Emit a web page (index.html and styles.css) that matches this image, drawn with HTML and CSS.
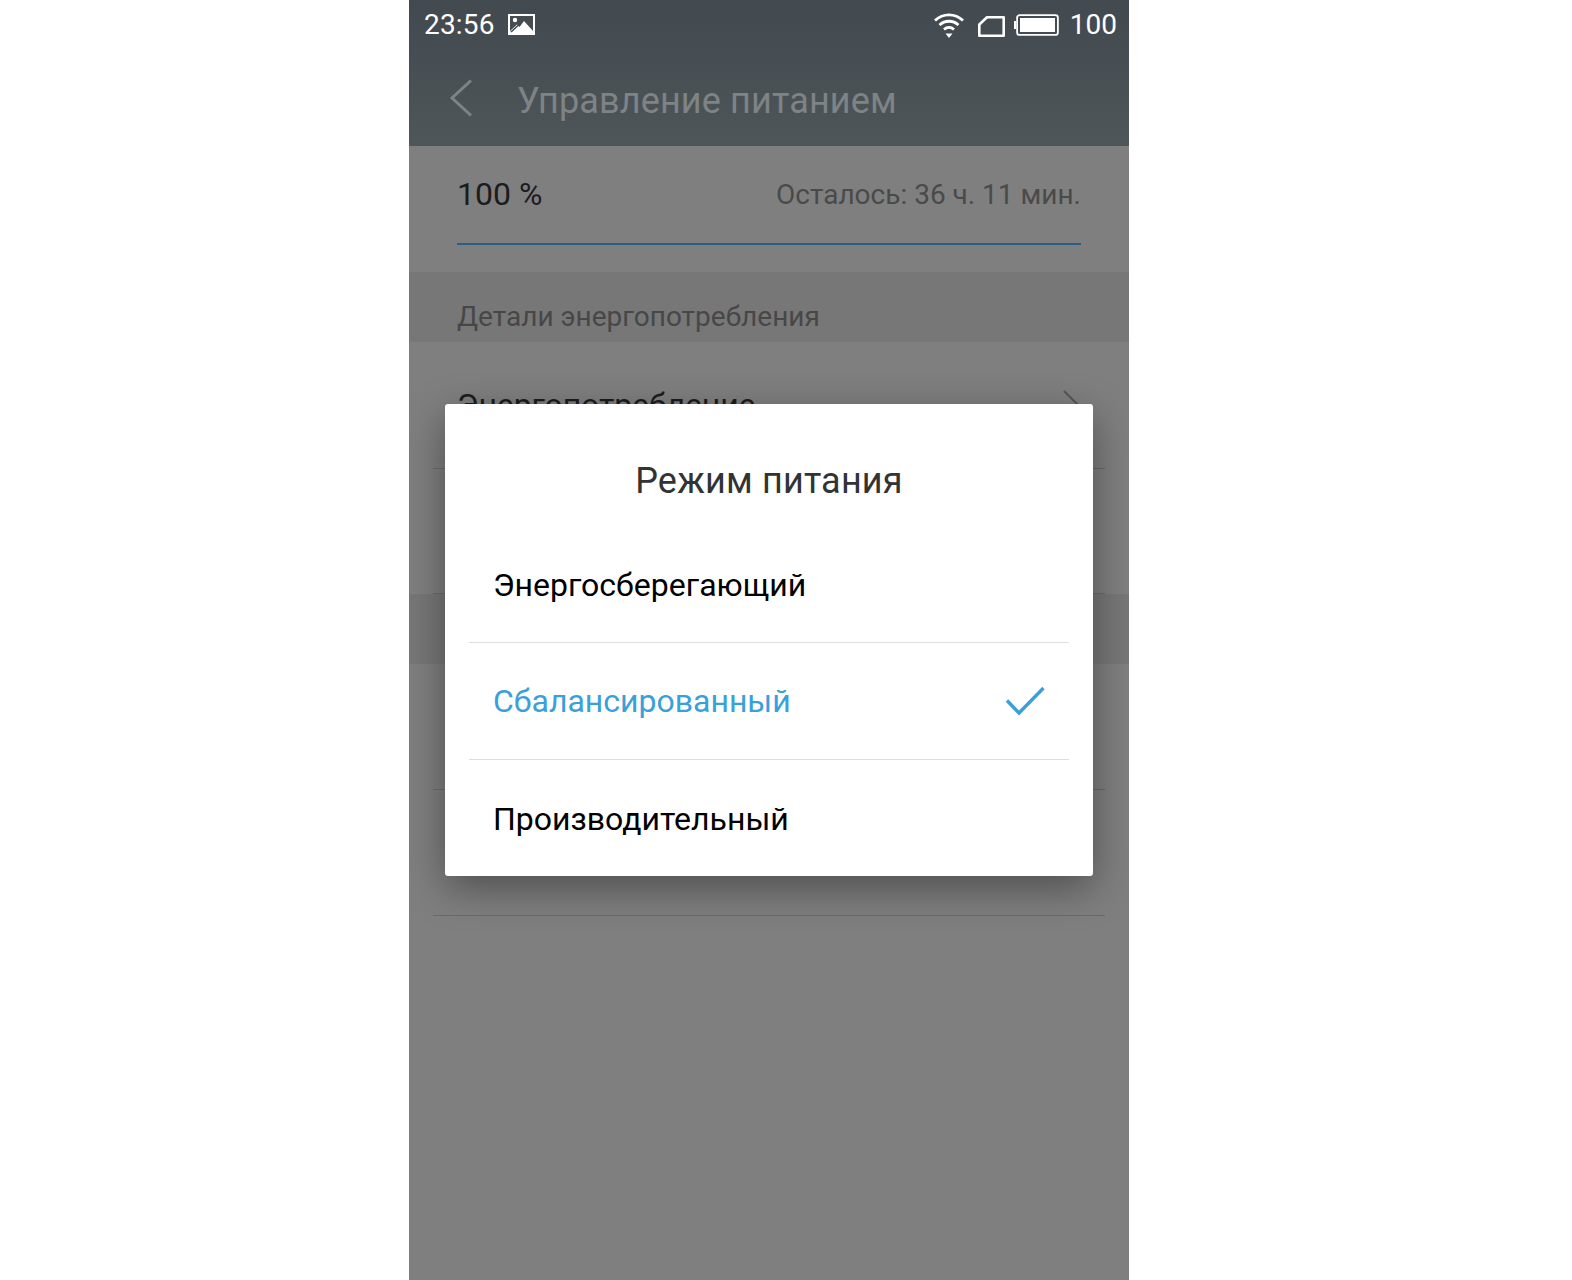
FILE: index.html
```html
<!DOCTYPE html>
<html lang="ru">
<head>
<meta charset="utf-8">
<title>Управление питанием</title>
<link rel="stylesheet" href="styles.css">
</head>
<body>
<div class="phone">
  <header class="top">
    <div class="status">
      <span class="time">23:56</span>
      <svg class="ic-pic" width="27" height="21" viewBox="0 0 27 21"><rect width="27" height="21" fill="#fff"/><rect x="2" y="2" width="23" height="15" fill="#454c52"/><circle cx="7" cy="6" r="2.200" fill="#fff"/><path fill="#fff" d="M2 17l7-6.500 2.500 2.500L16 7l9 10v2H2z"/><path fill="none" stroke="#454c52" stroke-width="1.600" d="M3 18l7.500-7"/></svg>
      <span class="spacer"></span>
      <svg class="ic-wifi" width="32" height="27" viewBox="0 0 32 27"><g fill="none" stroke="#fff" stroke-width="2.800"><path d="M2 9.500c8-7.500 20-7.500 28 0"/><path d="M6.500 14c5.500-5 13.500-5 19 0"/><path d="M11 18.500c3-2.700 7-2.700 10 0"/></g><path fill="#fff" d="M12.500 22.500h7L16 27z"/></svg>
      <svg class="ic-sim" width="27" height="21" viewBox="0 0 27 21"><path fill="none" stroke="#fff" stroke-width="2.600" stroke-linejoin="round" d="M9 1.300h16.700v18.400H1.300V8.500z"/></svg>
      <svg class="ic-bat" width="45" height="22" viewBox="0 0 45 22"><path fill="#fff" d="M0 7h2v8H0z"/><rect x="3.100" y="1.100" width="40.800" height="19.800" rx="2.500" fill="none" stroke="#fff" stroke-width="1.800"/><rect x="6" y="4" width="35" height="14" fill="#fff"/></svg>
      <span class="level">100</span>
    </div>
    <div class="bar">
      <svg class="ic-back" width="24" height="38" viewBox="0 0 24 38"><path fill="none" stroke="#7e8386" stroke-width="3" d="M22 1.500L3 19l19 17.500"/></svg>
      <h1 class="title">Управление питанием</h1>
    </div>
  </header>

  <section class="battery">
    <div class="battery-info">
      <span class="percent">100 %</span>
      <span class="remain">Осталось: 36 ч. 11 мин.</span>
    </div>
    <div class="progress"></div>
  </section>

  <div class="section-head">Детали энергопотребления</div>
  <div class="row row-tall">
    <span class="row-label">Энергопотребление</span>
    <svg class="ic-chevron" width="20" height="34" viewBox="0 0 20 34"><path fill="none" stroke="#565656" stroke-width="2" d="M2 1l16 16L2 33"/></svg>
  </div>
  <div class="row row-short"></div>
  <div class="section-head"></div>
  <div class="row"></div>
  <div class="row"></div>

  <div class="dialog">
    <h2 class="dialog-title">Режим питания</h2>
    <div class="option option-first">Энергосберегающий</div>
    <div class="option option-active">Сбалансированный
      <svg class="ic-check" width="40" height="30" viewBox="0 0 40 30"><path fill="none" stroke="#3aa0da" stroke-width="3.400" d="M2 14.500l12 12.500L38.500 2"/></svg>
    </div>
    <div class="option">Производительный</div>
  </div>
</div>
</body>
</html>
```
FILE: styles.css
```css
* { box-sizing: border-box; }
html, body { margin: 0; height: 100%; background: #fff; }
body { font-family: Roboto, sans-serif; overflow: hidden; }

.phone {
  position: relative;
  width: 720px;
  height: 1280px;
  margin-left: 409px;
  background: #7f7f7f;
  overflow: hidden;
}

.top { height: 146px; background: linear-gradient(#42494f, #4f5659); }
.status {
  display: flex;
  align-items: center;
  height: 49px;
  padding: 0 12px 0 15px;
  color: #fff;
  font-size: 28px;
}
.time { letter-spacing: .2px; }
.ic-pic { margin-left: 13px; }
.spacer { flex: 1; }
.ic-sim { margin: 3px 0 0 13px; }
.ic-bat { margin-left: 9px; }
.level { margin-left: 11px; }

.bar { display: flex; align-items: center; height: 97px; padding: 0 0 0 40px; }
.title { margin: 6px 0 0 44px; font-size: 36px; font-weight: 400; color: #7e8386; letter-spacing: .15px; }

.battery { height: 126px; padding: 0 48px; }
.battery-info {
  display: flex;
  align-items: center;
  justify-content: space-between;
  height: 97px;
}
.percent { margin-bottom: 2px; font-size: 32px; color: #1c1c1c; }
.remain { font-size: 28px; color: #4a4a4a; }
.progress { height: 2px; background: #2c5e80; }

.section-head {
  height: 70px;
  padding: 28px 48px 0;
  background: #777;
  color: #474747;
  font-size: 28px;
  line-height: 34px;
}

.row {
  position: relative;
  height: 126px;
  margin: 0 24px;
  padding: 44px 24px 0;
  border-bottom: 1px solid #6b6b6b;
  font-size: 32px;
  color: #1c1c1c;
}
.row-tall { height: 127px; }
.row-short { height: 125px; }
.row-label { letter-spacing: -.1px; }
.ic-chevron { position: absolute; right: 23px; top: 48px; }

.dialog {
  position: absolute;
  left: 36px;
  top: 404px;
  width: 648px;
  height: 472px;
  padding: 0 24px;
  background: #fff;
  border-radius: 3px;
  box-shadow: 0 12px 40px rgba(0, 0, 0, .38);
}
.dialog-title {
  margin: 0;
  height: 122px;
  padding-top: 53px;
  text-align: center;
  font-size: 36px;
  line-height: 48px;
  font-weight: 400;
  color: #333;
  letter-spacing: .2px;
}
.option {
  display: flex;
  align-items: center;
  justify-content: space-between;
  height: 117px;
  padding: 0 24px;
  border-bottom: 1px solid #ddd;
  font-size: 32px;
  color: #000;
}
.option:last-child { border-bottom: 0; }
.option-first { padding-top: 2px; }
.option-active { color: #3aa0da; }
```
